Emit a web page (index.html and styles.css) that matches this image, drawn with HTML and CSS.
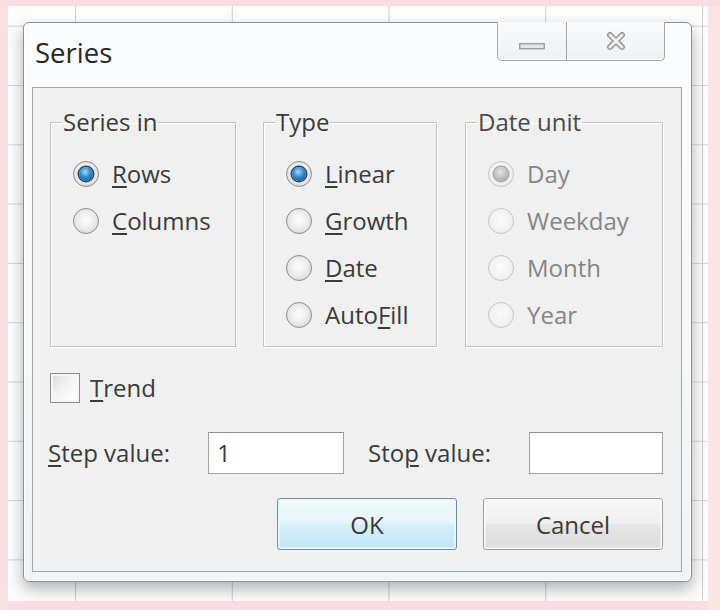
FILE: index.html
```html
<!DOCTYPE html>
<html>
<head>
<meta charset="utf-8">
<title>Series</title>
<link rel="stylesheet" href="styles.css">
</head>
<body>
<div class="sheet">
  <div class="dialog">
    <div class="titlebar">
      <div class="title">Series</div>
      <div class="caption-btns">
        <div class="cbtn cmin">
          <svg width="26" height="7" viewBox="0 0 26 7"><rect x="0.75" y="0.75" width="24.5" height="5" fill="#e6e6e6" stroke="#969696" stroke-width="1.3"/></svg>
        </div>
        <div class="cbtn cclose">
          <svg width="22" height="20" viewBox="0 0 22 20"><path d="M5 4 L17 16 M17 4 L5 16" stroke="#959595" stroke-width="6" stroke-linecap="round" fill="none"/><path d="M5 4 L17 16 M17 4 L5 16" stroke="#eeeeee" stroke-width="3" stroke-linecap="round" fill="none"/></svg>
        </div>
      </div>
    </div>
    <div class="client">
      <div class="groups">
        <fieldset class="group g-series">
          <legend>Series in</legend>
          <div class="opt"><span class="radio on"></span><span class="lbl"><u>R</u>ows</span></div>
          <div class="opt"><span class="radio"></span><span class="lbl"><u>C</u>olumns</span></div>
        </fieldset>
        <fieldset class="group g-type">
          <legend>Type</legend>
          <div class="opt"><span class="radio on"></span><span class="lbl"><u>L</u>inear</span></div>
          <div class="opt"><span class="radio"></span><span class="lbl"><u>G</u>rowth</span></div>
          <div class="opt"><span class="radio"></span><span class="lbl"><u>D</u>ate</span></div>
          <div class="opt"><span class="radio"></span><span class="lbl">Auto<u>F</u>ill</span></div>
        </fieldset>
        <fieldset class="group g-date disabled">
          <legend>Date unit</legend>
          <div class="opt"><span class="radio on dis"></span><span class="lbl">Day</span></div>
          <div class="opt"><span class="radio dis"></span><span class="lbl">Weekday</span></div>
          <div class="opt"><span class="radio dis"></span><span class="lbl">Month</span></div>
          <div class="opt"><span class="radio dis"></span><span class="lbl">Year</span></div>
        </fieldset>
      </div>
      <div class="trend-row">
        <span class="checkbox"></span><span class="lbl"><u>T</u>rend</span>
      </div>
      <div class="value-row">
        <span class="vlabel step"><u>S</u>tep value:</span>
        <div class="field f-step">1</div>
        <span class="vlabel stop">Sto<u>p</u> value:</span>
        <div class="field f-stop"></div>
      </div>
      <div class="btn-row">
        <div class="btn ok">OK</div>
        <div class="btn cancel">Cancel</div>
      </div>
    </div>
  </div>
</div>
</body>
</html>
```
FILE: styles.css
```css
html, body {
  margin: 0;
  padding: 0;
}
body {
  font-family: "Open Sans", "Noto Sans", sans-serif;
  color: #3a3a3a;
}
.sheet {
  width: 720px;
  height: 610px;
  box-sizing: border-box;
  padding: 22px 0 0 23px;
  background-color: #fdfdfd;
  background-image:
    linear-gradient(to right, #cdcdcd 1px, transparent 1px),
    linear-gradient(to bottom, #d3d3d3 1px, transparent 1px);
  background-size: 156.75px 100%, 100% 59.3px;
  background-position: 75px 0, 0 25.7px;
  box-shadow: inset 0 6px 0 #f9dde0, inset 8px 0 0 #f9e0e3, inset -12px 0 0 #fbe3e6, inset 0 -9px 0 #f9dde0;
}
.dialog {
  width: 669px;
  height: 560px;
  box-sizing: border-box;
  border: 1px solid #8e8e8e;
  border-radius: 6px;
  padding: 0 9px 9px 8px;
  background: linear-gradient(to bottom, #fbfcfd, #f1f4f6);
  box-shadow: 0 7px 16px rgba(0, 0, 0, 0.3), inset 0 0 0 1px #ffffff;
  display: flex;
  flex-direction: column;
}
.titlebar {
  height: 64px;
  display: flex;
  justify-content: space-between;
  align-items: flex-start;
}
.title {
  margin: 14px 0 0 3px;
  font-size: 27.5px;
  line-height: 32px;
  color: #262626;
}
.caption-btns {
  display: flex;
  margin-right: 17px;
  margin-top: -1px;
  border: 1px solid #a6a6a6;
  border-top: none;
  border-radius: 0 0 5px 5px;
  background: linear-gradient(to bottom, #f9fafb, #eef1f3);
  box-shadow: inset 0 -1px 0 #ffffff;
}
.cbtn {
  height: 38px;
  display: flex;
  justify-content: center;
}
.cmin {
  width: 69px;
  border-right: 1px solid #a6a6a6;
  align-items: flex-end;
  box-sizing: border-box;
  padding-bottom: 10px;
}
.cclose {
  width: 97px;
  align-items: center;
}
.client {
  flex: 1;
  border: 1px solid #a4a4a4;
  background: #f0f0f0;
  padding: 0 18px 0 17px;
  display: flex;
  flex-direction: column;
}
.groups {
  display: flex;
  margin-top: 20px;
  gap: 27px;
}
.group {
  margin: 0;
  height: 239px;
  box-sizing: border-box;
  padding: 14px 0 0 11px;
  border: 1px solid #c2c2c2;
  box-shadow: 1px 1px 0 #ffffff, inset 1px 1px 0 #ffffff;
}
.g-series { width: 186px; }
.g-type { width: 174px; margin-right: 1px; }
.g-date { width: 198px; }
.group legend {
  padding: 0 1px;
  font-size: 24px;
  line-height: 28px;
  color: #3a3a3a;
}
.opt {
  height: 47px;
  display: flex;
  align-items: center;
  margin-left: 11px;
  gap: 13px;
}
.lbl {
  font-size: 24px;
  line-height: 28px;
}
u {
  text-decoration-thickness: 1.5px;
  text-underline-offset: 3px;
}
.disabled .lbl { color: #858585; }
.disabled legend { color: #4a4a4a; }
.radio {
  width: 26px;
  height: 26px;
  box-sizing: border-box;
  border-radius: 50%;
  border: 1.5px solid #8d8d8d;
  background: radial-gradient(circle at 50% 45%, #ffffff 0%, #ebebeb 50%, #cdcdcd 100%);
  display: flex;
  align-items: center;
  justify-content: center;
  flex: none;
}
.radio.on::after {
  content: "";
  width: 14px;
  height: 14px;
  border-radius: 50%;
  background: radial-gradient(circle at 45% 35%, #a6e0ff 0%, #3b8fd0 40%, #124576 100%);
  box-shadow: 0 0 0 1.5px #24476b;
}
.radio.dis {
  border-color: #c4c4c4;
  background: radial-gradient(circle at 50% 45%, #fbfbfb 0%, #f1f1f1 60%, #e2e2e2 100%);
}
.radio.on.dis::after {
  background: radial-gradient(circle at 45% 35%, #e6e6e6 0%, #b9b9b9 60%, #9d9d9d 100%);
  box-shadow: 0 0 0 1.5px #a8a8a8;
}
.trend-row {
  margin-top: 26px;
  height: 30px;
  display: flex;
  align-items: center;
  gap: 10px;
}
.checkbox {
  width: 30px;
  height: 30px;
  box-sizing: border-box;
  border: 1.5px solid #8e8e8e;
  background: linear-gradient(135deg, #d9d9d9 0%, #f3f3f3 45%, #ffffff 100%);
  box-shadow: inset 0 0 0 2px #f6f6f6;
}
.value-row {
  margin-top: 29px;
  margin-left: -2px;
  height: 42px;
  display: flex;
  align-items: center;
}
.vlabel {
  font-size: 24px;
  line-height: 28px;
}
.step { width: 160px; }
.stop { width: 161px; margin-left: 24px; }
.field {
  height: 42px;
  box-sizing: border-box;
  border: 1px solid #a3a3a3;
  border-top-color: #8f8f8f;
  background: #ffffff;
  font-size: 24px;
  line-height: 40px;
  padding-left: 8px;
}
.f-step { width: 136px; }
.f-stop { width: 134px; }
.btn-row {
  margin-top: 24px;
  display: flex;
  justify-content: flex-end;
  gap: 26px;
}
.btn {
  width: 180px;
  height: 52px;
  box-sizing: border-box;
  border-radius: 3px;
  display: flex;
  align-items: center;
  justify-content: center;
  font-size: 24px;
  color: #3a3a3a;
}
.ok {
  border: 1.5px solid #6a8fa8;
  background: linear-gradient(to bottom, #f2fafe 0%, #e6f5fc 48%, #d6eefa 52%, #c3e5f7 100%);
  box-shadow: inset 0 0 0 1.5px #ecf8fe;
}
.cancel {
  border: 1.5px solid #a0a0a0;
  background: linear-gradient(to bottom, #f7f7f7 0%, #f0f0f0 48%, #e6e6e6 52%, #dcdcdc 100%);
  box-shadow: inset 0 0 0 1.5px #fafafa;
}
```
